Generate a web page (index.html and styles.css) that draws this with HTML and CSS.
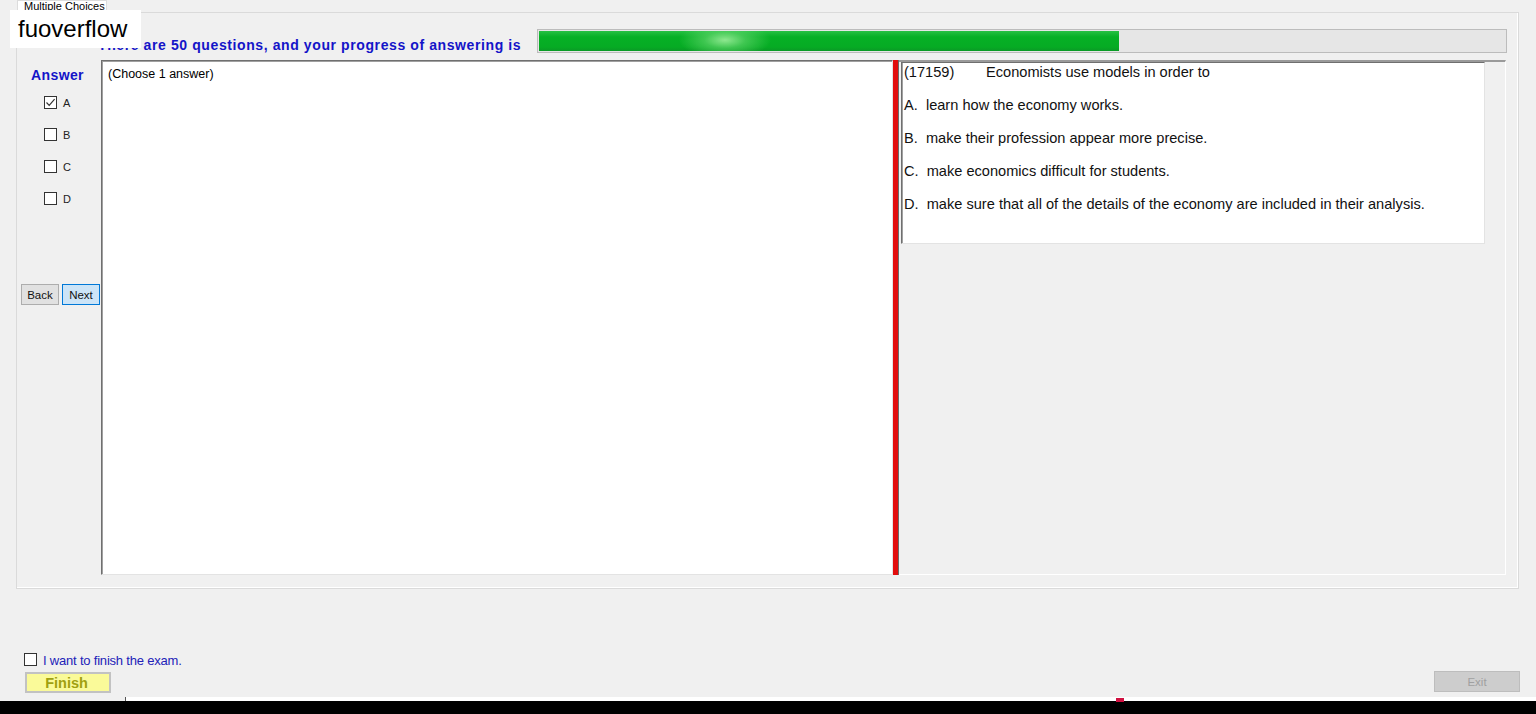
FILE: index.html
```html
<!DOCTYPE html>
<html lang="en">
<head>
    <meta charset="UTF-8">
    <meta name="viewport" content="width=device-width, initial-scale=1.0">
    <title>Multiple Choices</title>
    <link rel="stylesheet" href="styles.css">
</head>
<body>
    <div class="logo">fuoverflow</div>

    <div class="tabs">
        <div class="tab">Multiple Choices</div>
    </div>

    <div class="tab-page">
        <div class="progress-row">
            <span class="progress-text">There are 50 questions, and your progress of answering is</span>
            <div class="progress"><div class="progress-fill" style="width: 60%"></div></div>
        </div>

        <div class="exam">
            <div class="answer-col">
                <div class="answer-title">Answer</div>
                <label class="opt"><span class="box checked"><svg width="11" height="11" viewBox="0 0 11 11"><path d="M1.5 5.5 L4.2 8.3 L9.6 2.2" fill="none" stroke="#333" stroke-width="1.2"/></svg></span>A</label>
                <label class="opt"><span class="box"></span>B</label>
                <label class="opt"><span class="box"></span>C</label>
                <label class="opt"><span class="box"></span>D</label>
                <div class="nav-btns">
                    <button class="btn">Back</button>
                    <button class="btn next">Next</button>
                </div>
            </div>

            <div class="answer-pane">(Choose 1 answer)</div>
            <div class="splitter"></div>

            <div class="question-pane">
                <div class="question">
                    <p><span class="qid">(17159)</span>Economists use models in order to</p>
                    <p>A.  learn how the economy works.</p>
                    <p>B.  make their profession appear more precise.</p>
                    <p>C.  make economics difficult for students.</p>
                    <p>D.  make sure that all of the details of the economy are included in their analysis.</p>
                </div>
            </div>
        </div>
    </div>

    <div class="finish">
        <label class="confirm"><span class="box"></span>I want to finish the exam.</label>
        <div class="finish-btns">
            <button class="finish-btn">Finish</button>
            <button class="exit-btn" disabled>Exit</button>
        </div>
        <div class="strip"><span class="mark"></span></div>
    </div>

    <div class="taskbar"></div>
</body>
</html>
```

FILE: styles.css
```css
* { box-sizing: border-box; }
body { margin: 0; height: 714px; overflow: hidden; background: #f0f0f0; font-family: "Liberation Sans", Arial, sans-serif; font-size: 12px; color: #000; display: flex; flex-direction: column; }

.logo { position: absolute; left: 10px; top: 10px; width: 131px; height: 38px; background: #fff; font-size: 24px; line-height: 38px; padding-left: 8px; z-index: 2; }

.tabs { height: 12px; padding-left: 17px; }
.tab { width: 90px; height: 13px; background: #fff; border: 1px solid #dcdcdc; border-bottom: none; font-size: 11px; line-height: 10px; padding-left: 6px; overflow: hidden; position: relative; z-index: 1; }

.tab-page { margin: 0 17px 0 16px; height: 577px; border: 1px solid #dadada; box-shadow: inset -1px -1px #fff; padding: 16px 11px 13px 0; display: flex; flex-direction: column; }

.progress-row { display: flex; align-items: flex-end; height: 24px; padding-left: 81px; }
.progress-text { color: #1414c8; font-weight: bold; font-size: 14px; letter-spacing: 0.6px; line-height: 16px; white-space: nowrap; }
.progress { flex: 1; height: 24px; margin-left: 16px; border: 1px solid #bcbcbc; background: #e6e6e6; padding: 1px 0 1px 1px; }
.progress-fill { height: 100%; background: radial-gradient(ellipse 46px 18px at 186px 45%, rgba(150, 235, 150, 0.95), rgba(100, 215, 110, 0.6) 45%, rgba(6, 176, 37, 0) 100%), linear-gradient(#27c043, #06b025 30%, #06ab24 80%, #0a9a26); }

.exam { display: flex; height: 515px; margin-top: 7px; }

.answer-col { width: 84px; padding-top: 7px; display: flex; flex-direction: column; }
.answer-title { color: #1414c8; font-weight: bold; font-size: 14px; letter-spacing: 0.4px; line-height: 16px; padding-left: 14px; margin-bottom: 6px; }
.opt { display: flex; align-items: center; height: 32px; padding-left: 27px; padding-bottom: 5px; gap: 6px; font-size: 11px; color: #222; }
.box { width: 13px; height: 13px; border: 1px solid #333; background: #fff; display: inline-flex; align-items: center; justify-content: center; flex: none; }
.nav-btns { display: flex; gap: 3px; margin-top: 67px; padding-left: 4px; }
.btn { width: 38px; height: 21px; padding: 0; font-family: inherit; font-size: 11.5px; color: #111; background: #e1e1e1; border: 1px solid #adadad; border-radius: 0; }
.btn.next { background: #cce4f7; border-color: #0078d7; }

.answer-pane { width: 792px; background: #fff; border: 1px solid; border-color: #6f6f6f #e3e3e3 #e3e3e3 #6f6f6f; box-shadow: inset 1px 1px #a0a0a0; padding: 5px 6px; line-height: 16px; font-size: 12.5px; }

.splitter { width: 6px; background: #e20d0d; border-right: 1px solid #6a6a6a; }

.question-pane { width: 607px; border-top: 2px solid #9a9a9a; border-right: 1px solid #fff; border-bottom: 1px solid #fff; padding: 0 20px 0 2px; }
.question { height: 182px; background: #fff; border: 1px solid; border-color: #6f6f6f #e3e3e3 #e3e3e3 #6f6f6f; box-shadow: inset 1px 0 #a0a0a0; padding: 0 0 0 2px; font-size: 14.6px; color: #111; }
.question p { margin: 0 0 15px; line-height: 18px; white-space: pre; }
.qid { display: inline-block; width: 82px; }

.finish { height: 112px; display: flex; flex-direction: column; padding: 62px 16px 0 24px; }
.confirm { display: flex; align-items: center; height: 16px; gap: 6px; color: #2222b8; font-size: 13px; letter-spacing: -0.2px; padding-top: 3px; }
.confirm .box { margin-top: -3px; }
.finish-btns { display: flex; justify-content: space-between; margin-top: 4px; height: 21px; }
.finish-btn { width: 86px; height: 21px; margin: 1px 0 0 1px; padding: 0 3px 0 0; font-family: inherit; font-size: 14.5px; font-weight: bold; color: #a0a010; background: #fafa99; border: 2px solid #c2c2c2; border-radius: 0; }
.exit-btn { width: 86px; height: 21px; padding: 0; font-family: inherit; font-size: 11.5px; color: #a0a0a0; background: #cdcdcd; border: 1px solid #bdbdbd; border-radius: 0; }
.strip { height: 4px; margin: 5px -16px 0 101px; background: #fff; border-left: 1px solid #555; position: relative; }
.mark { position: absolute; left: 990px; top: 1px; width: 8px; height: 4px; background: #d01040; }

.taskbar { height: 13px; background: #000; }
```
